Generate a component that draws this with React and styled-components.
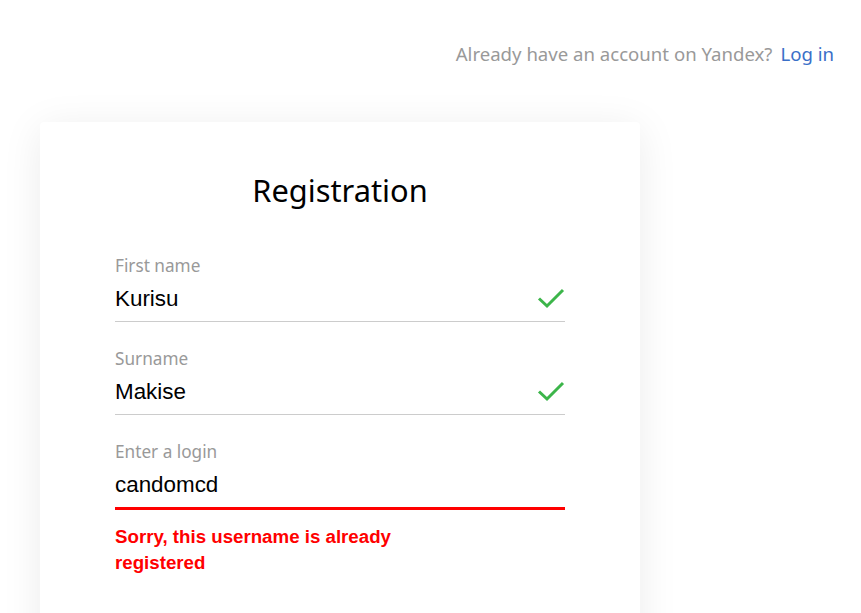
import React from "react";
import styled, { createGlobalStyle } from "styled-components";

const Global = createGlobalStyle`
  html, body { margin: 0; padding: 0; background: #fff; }
  body { font-family: "Noto Sans", "Open Sans", sans-serif; overflow: hidden; }
`;

const Page = styled.div`
  width: 861px;
  height: 613px;
  overflow: hidden;
  display: flex;
  flex-direction: column;
  & > * { flex-shrink: 0; }
`;

const TopBar = styled.header`
  display: flex;
  justify-content: flex-end;
  align-items: center;
  gap: 8px;
  height: 40px;
  padding: 33px 27px 0 0;
  font-size: 18.6px;
  color: #999;
`;

const LoginLink = styled.a`
  color: #3a6fc8;
  text-decoration: none;
`;

const Card = styled.main`
  margin: 49px 0 0 40px;
  width: 600px;
  min-height: 560px;
  box-sizing: border-box;
  padding: 49px 75px 0;
  background: #fff;
  border-radius: 4px;
  box-shadow: 0 6px 40px rgba(0, 0, 0, 0.08);
  display: flex;
  flex-direction: column;
`;

const Title = styled.h1`
  margin: 0 0 46px;
  font-size: 30.8px;
  font-weight: 400;
  line-height: 38px;
  text-align: center;
  color: #000;
`;

const Field = styled.div`
  display: flex;
  flex-direction: column;
  margin-bottom: 26px;
`;

const Label = styled.div`
  font-size: 17.2px;
  line-height: 22px;
  color: #999;
`;

const InputRow = styled.div`
  display: flex;
  align-items: center;
  justify-content: space-between;
  height: 44px;
  border-bottom: ${(p) => (p.$error ? "3px solid #f00" : "1px solid #ccc")};
`;

const Value = styled.span`
  font-family: "Liberation Sans", Arial, sans-serif;
  font-size: 22.4px;
  color: #000;
`;

const ErrorText = styled.div`
  margin-top: 14px;
  max-width: 300px;
  font-family: "Liberation Sans", Arial, sans-serif;
  font-weight: 700;
  font-size: 18.7px;
  line-height: 26px;
  color: #f00;
`;

const CheckIcon = styled.svg`
  width: 28px;
  height: 22px;
  margin-top: -3px;
`;

const Check = () => (
  <CheckIcon viewBox="0 0 28 22">
    <path d="M2 11.5 L10 19 L26 3" fill="none" stroke="#3cb54a" strokeWidth="3" />
  </CheckIcon>
);

const fields = [
  { label: "First name", value: "Kurisu", ok: true },
  { label: "Surname", value: "Makise", ok: true },
  { label: "Enter a login", value: "candomcd", error: "Sorry, this username is already registered" },
];

export default function App() {
  return (
    <Page>
      <Global />
      <TopBar>
        <span>Already have an account on Yandex?</span>
        <LoginLink href="#">Log in</LoginLink>
      </TopBar>
      <Card>
        <Title>Registration</Title>
        {fields.map((f) => (
          <Field key={f.label}>
            <Label>{f.label}</Label>
            <InputRow $error={!!f.error}>
              <Value>{f.value}</Value>
              {f.ok && <Check />}
            </InputRow>
            {f.error && <ErrorText>{f.error}</ErrorText>}
          </Field>
        ))}
      </Card>
    </Page>
  );
}
